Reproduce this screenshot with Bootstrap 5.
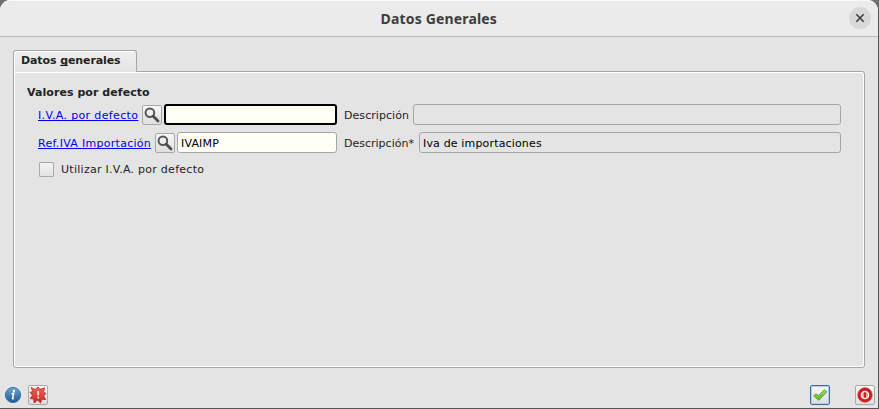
<!DOCTYPE html>
<html lang="es">
<head>
<meta charset="utf-8">
<title>Datos Generales</title>
<link href="https://cdn.jsdelivr.net/npm/bootstrap@5.3.0/dist/css/bootstrap.min.css" rel="stylesheet">
<style>
body{background:#6f6f6f;font:11px/14px "DejaVu Sans",sans-serif;color:#232323;overflow:hidden}
.win{width:879px;height:409px;background:#e4e4e4;border-right:1px solid #555;border-bottom:1px solid #555;border-radius:11px 11px 0 0}
.titlebar{height:37px;background:#ebebeb;border-bottom:1px solid #b9b9b9;box-shadow:inset 0 1px #fafafa;border-radius:11px 11px 0 0;padding:0 7px 0 29px}
.title-text{font:700 14px/20px "Noto Sans",sans-serif;color:#3d3d3d;width:117px;white-space:nowrap;letter-spacing:.17px;padding-top:1px}
.close-btn{width:22px;height:22px;background:#d8d8d8;border:0}
.page-area{padding:13px 13px 0}
.tab-head{width:124px;height:22px;border:1px solid #a6a6a6;border-bottom:0;border-radius:3px 3px 0 0;background:linear-gradient(#efefef,#e4e4e4);box-shadow:inset 1px 1px #fff;padding:3px 0 0 7px;margin-bottom:-1px;z-index:1;letter-spacing:-.1px}
.tab-head u{text-decoration-skip-ink:none;text-underline-offset:1px}
.pane{width:852px;height:297px;border:1px solid #a6a6a6;border-radius:0 3px 3px 3px;box-shadow:inset 1px 1px #fff,inset -1px -1px #fff;padding:14px 23px 0 13px}
.group-title{letter-spacing:.06px}
.field-row{height:21px;padding-left:11px;white-space:nowrap}
.iva-row{margin-top:4px}
.ref-row{margin-top:7px}
.check-row{margin-top:6px;padding-left:12px}
.check-row span{margin-left:7px;letter-spacing:.27px}
.field-row a{color:#0000f0;text-decoration:underline;text-decoration-skip-ink:none;text-underline-offset:1px;text-decoration-thickness:1px;padding-top:2px;flex:none}
.iva-row a{width:100px;letter-spacing:.36px}
.ref-row a{width:113px;letter-spacing:.29px}
.caption{margin-left:7px;padding-top:2px;flex:none}
.iva-row .caption{width:65px;letter-spacing:.06px}
.ref-row .caption{width:71px}
.tool{width:20px;height:20px;border:1px solid #a9a9a9;border-radius:2px;background:linear-gradient(#f7f7f7,#dedede);padding:0;flex:none}
.entry{height:21px;border:1px solid #a6a6a6;border-radius:3px;background:#fffff6;padding:2px 3px 0;font:11px "DejaVu Sans",sans-serif;letter-spacing:.16px;color:#000;outline:0;min-width:0}
.entry.code-entry{margin-left:2px;flex:none}
.iva-row .code-entry{width:173px}
.ref-row .code-entry{width:160px}
.entry.active-entry{border:2px solid #000}
.entry.locked{background:#e4e4e4}
.tick{width:15px;height:15px;border:1px solid #a9a9a9;border-radius:1px;background:linear-gradient(#f4f4f4,#e2e2e2);appearance:none}
.footer-bar{padding:17px 3px 0 4px}
.fault{margin-left:6px}
.quit{margin-left:25px}
.tool.ok{border-color:#386ea5;box-shadow:inset 0 0 0 1px #b5cce3}
svg{display:block}
</style>
<script src="https://cdn.jsdelivr.net/npm/bootstrap@5.3.0/dist/js/bootstrap.bundle.min.js"></script>
</head>
<body>
<svg width="0" height="0" class="position-absolute"><defs>
<symbol id="lens" viewBox="0 0 18 18"><circle cx="6.9" cy="6.7" r="4.3" fill="#efefef" stroke="#555" stroke-width="2"/><path d="M10.3 10.2 15 14.9" stroke="#4b4b4b" stroke-width="2.8" stroke-linecap="round"/></symbol>
<linearGradient id="blue" x2="0" y2="1"><stop stop-color="#70a5d5"/><stop offset="1" stop-color="#195b9d"/></linearGradient>
<linearGradient id="green" x2="0" y2="1"><stop stop-color="#a0dc60"/><stop offset="1" stop-color="#62b82c"/></linearGradient>
<linearGradient id="red" x2="0" y2="1"><stop stop-color="#ea665c"/><stop offset="1" stop-color="#ce2822"/></linearGradient>
</defs></svg>
<div class="win d-flex flex-column">
  <header class="titlebar d-flex align-items-center">
    <div class="flex-fill d-flex justify-content-center"><div class="title-text">Datos Generales</div></div>
    <button class="close-btn rounded-circle p-0 d-flex align-items-center justify-content-center" aria-label="Cerrar"><svg width="10" height="10" viewBox="0 0 10 10"><path d="M1.3 1.3 8.7 8.7M8.7 1.3 1.3 8.7" stroke="#3a3a3a" stroke-width="1.5"/></svg></button>
  </header>
  <main class="page-area">
    <div class="tab-head fw-bold position-relative">Datos <u>g</u>enerales</div>
    <section class="pane">
      <div class="group-title fw-bold">Valores por defecto</div>
      <div class="field-row iva-row d-flex align-items-center">
        <a href="#">I.V.A. por defecto</a>
        <button class="tool ms-1" aria-label="Buscar"><svg width="18" height="18"><use href="#lens"/></svg></button>
        <input class="entry code-entry active-entry">
        <span class="caption">Descripción</span>
        <input class="entry locked flex-fill ms-1" readonly>
      </div>
      <div class="field-row ref-row d-flex align-items-center">
        <a href="#">Ref.IVA Importación</a>
        <button class="tool ms-1" aria-label="Buscar"><svg width="18" height="18"><use href="#lens"/></svg></button>
        <input class="entry code-entry" value="IVAIMP">
        <span class="caption">Descripción*</span>
        <input class="entry locked flex-fill ms-1" value="Iva de importaciones" readonly>
      </div>
      <label class="field-row check-row d-flex align-items-center"><input type="checkbox" class="tick m-0"><span>Utilizar I.V.A. por defecto</span></label>
    </section>
  </main>
  <footer class="footer-bar d-flex align-items-center">
    <svg width="18" height="18" viewBox="0 0 18 18"><circle cx="9" cy="9" r="7.6" fill="url(#blue)" stroke="#2d659c" stroke-width=".9"/><circle cx="9.9" cy="5" r="1.2" fill="#fff"/><path d="M7.5 7.7 9.7 7.2 8.5 12.5Q8.4 13.2 9.9 12.3" fill="none" stroke="#fff" stroke-width="1.5"/></svg>
    <button class="tool fault" aria-label="Error"><svg width="18" height="18" viewBox="0 0 18 18"><path d="M2 1.5 6.2 3.4 9 1 11 3.3 15.7 1.8 14.5 6 17 7.5 14.7 10 16.8 13.5 12.7 13.4 11.6 17 8.6 14.2 5 17 4.7 13 1 12.6 3.4 9.4 1 6.3 3.8 5.5Z" fill="url(#red)" stroke="#b3211d" stroke-width=".7"/><path d="M9.2 5V9.5M9.2 10.8V12.4" stroke="#f7dcd8" stroke-width="1.8"/></svg></button>
    <button class="tool ok ms-auto" aria-label="Aceptar"><svg width="18" height="18" viewBox="0 0 18 18"><path d="M2.6 9.8 5 7.8 7.4 9.7 13.6 3.6 16 5.8 7.8 14.4Z" fill="url(#green)" stroke="#4c982a" stroke-width=".8" stroke-linejoin="round"/></svg></button>
    <button class="tool quit" aria-label="Cancelar"><svg width="18" height="18" viewBox="0 0 18 18"><circle cx="9" cy="9" r="7.2" fill="#d71920" stroke="#b31217" stroke-width=".6"/><circle cx="9" cy="9" r="4.3" fill="#fff"/><circle cx="9" cy="9" r="3.1" fill="#e8a5a5"/><path d="M9 6.4V11.6" stroke="#d71920" stroke-width="2.2"/></svg></button>
  </footer>
</div>
</body>
</html>
